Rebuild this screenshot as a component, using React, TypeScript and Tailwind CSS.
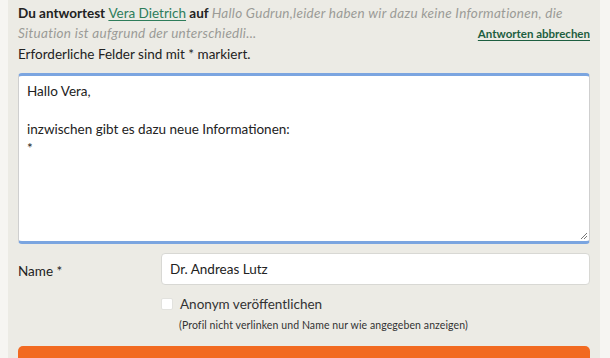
import React from "react";

export default function App() {
  return (
    <div className="w-[610px] h-[358px] bg-[#f6f5f2] overflow-hidden" style={{ fontFamily: "Lato, 'Open Sans', sans-serif" }}>
      <div className="ml-[8px] w-[592px] h-full bg-[#ecebe5] pl-[10px] pr-[10px] text-[#222]">
        <div className="pt-[3px] text-[13.5px] leading-[20px]">
          <div className="whitespace-nowrap">
            <span className="font-bold">Du antwortest </span>
            <a className="text-[#2e7d5b] underline underline-offset-2">Vera Dietrich</a>
            <span className="font-bold"> auf </span>
            <span className="italic text-[#9b9b97] tracking-[0.28px]">Hallo Gudrun,leider haben wir dazu keine Informationen, die</span>
          </div>
          <div className="flex items-baseline justify-between whitespace-nowrap">
            <span className="italic text-[#9b9b97] tracking-[0.28px]">Situation ist aufgrund der unterschiedli...</span>
            <a className="text-[11.5px] font-bold text-[#1d5e40] underline underline-offset-2">Antworten abbrechen</a>
          </div>
          <div>Erforderliche Felder sind mit * markiert.</div>
        </div>
        <div className="relative mt-[9px] h-[171px] bg-white rounded-[4px] border-x border-x-[#cfcfcf] border-t-[3px] border-b-[3px] border-t-[#7ba5e0] border-b-[#7ba5e0] px-[8px] pt-[6px] text-[13.5px] leading-[19px]">
          <div>Hallo Vera,</div>
          <div>&nbsp;</div>
          <div>inzwischen gibt es dazu neue Informationen:</div>
          <div>*</div>
          <svg className="absolute right-[1px] bottom-[1px]" width="8" height="8" viewBox="0 0 8 8">
            <path d="M7 1 L1 7 M7 4 L4 7" stroke="#777" strokeWidth="1" fill="none" />
          </svg>
        </div>
        <div className="mt-[9px] flex items-center">
          <div className="w-[143px] text-[13.5px] pt-[4px]">Name *</div>
          <div className="flex-1 h-[32px] bg-white rounded-[4px] border border-[#d8d8d4] flex items-center px-[8px] text-[13.5px]">Dr. Andreas Lutz</div>
        </div>
        <div className="ml-[143px] mt-[9px] flex items-center">
          <div className="w-[12px] h-[12px] bg-white rounded-[2px] border border-[#e2e2de]" />
          <span className="ml-[7px] text-[13.5px] text-[#333]">Anonym veröffentlichen</span>
        </div>
        <div className="ml-[161px] mt-[4px] text-[10.5px] tracking-[0.1px] text-[#333]">(Profil nicht verlinken und Name nur wie angegeben anzeigen)</div>
        <div className="mt-[12px] h-[20px] bg-[#f26a21] rounded-t-[5px]" />
      </div>
    </div>
  );
}
